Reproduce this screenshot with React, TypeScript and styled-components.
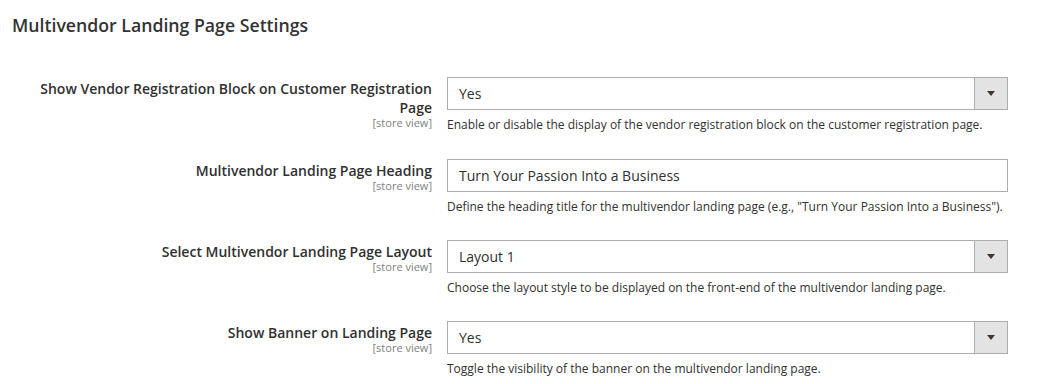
import React from "react";
import styled, { createGlobalStyle } from "styled-components";

const GlobalStyle = createGlobalStyle`
    html, body {
        margin: 0;
        padding: 0;
        background: #ffffff;
    }
    body {
        font-family: "Open Sans", "Liberation Sans", Arial, sans-serif;
        color: #303030;
    }
`;

interface IField {
    id: string;
    label: string;
    kind: "select" | "text";
    value: string;
    note: string;
}

const FIELDS: IField[] = [
    {
        id: "show_vendor_block",
        label: "Show Vendor Registration Block on Customer Registration Page",
        kind: "select",
        value: "Yes",
        note: "Enable or disable the display of the vendor registration block on the customer registration page.",
    },
    {
        id: "landing_heading",
        label: "Multivendor Landing Page Heading",
        kind: "text",
        value: "Turn Your Passion Into a Business",
        note: 'Define the heading title for the multivendor landing page (e.g., "Turn Your Passion Into a Business").',
    },
    {
        id: "landing_layout",
        label: "Select Multivendor Landing Page Layout",
        kind: "select",
        value: "Layout 1",
        note: "Choose the layout style to be displayed on the front-end of the multivendor landing page.",
    },
    {
        id: "show_banner",
        label: "Show Banner on Landing Page",
        kind: "select",
        value: "Yes",
        note: "Toggle the visibility of the banner on the multivendor landing page.",
    },
];

const Section = styled.section`
    padding: 15px 0 0 12px;
`;

const Title = styled.h2`
    margin: 0 0 41px;
    font-size: 17.7px;
    line-height: 21px;
    font-weight: 600;
    color: #333333;
`;

const Fieldset = styled.div`
    display: flex;
    flex-direction: column;
    padding-left: 20px;
`;

const Row = styled.div`
    display: grid;
    grid-template-columns: 400px 561px;
    column-gap: 15px;
    margin-bottom: 25px;

    &:first-child {
        margin-bottom: 26px;
    }
`;

const LabelCell = styled.div`
    display: flex;
    flex-direction: column;
    align-items: flex-end;
    text-align: right;
    padding-top: 2px;
`;

const LabelText = styled.label`
    font-size: 14px;
    line-height: 19px;
    font-weight: 600;
    color: #303030;
`;

const Scope = styled.span`
    font-size: 11px;
    line-height: 13px;
    color: #808080;
    margin-top: -1px;
`;

const ControlCell = styled.div`
    display: flex;
    flex-direction: column;
`;

const InputBox = styled.div`
    display: flex;
    align-items: stretch;
    height: 33px;
    box-sizing: border-box;
    border: 1px solid #adadad;
    background: #ffffff;
`;

const Value = styled.span`
    flex: 1;
    display: flex;
    align-items: center;
    padding: 0 11px;
    font-size: 14px;
    color: #303030;
`;

const ArrowBox = styled.span`
    width: 32px;
    display: flex;
    align-items: center;
    justify-content: center;
    background: #e3e3e3;
    border-left: 1px solid #adadad;
`;

const Arrow = styled.span`
    width: 0;
    height: 0;
    border-left: 4px solid transparent;
    border-right: 4px solid transparent;
    border-top: 5px solid #41362f;
`;

const Note = styled.div`
    margin-top: 6px;
    font-size: 12px;
    line-height: 17px;
    color: #303030;
`;

const App: React.FC = () => {
    return (
        <>
            <GlobalStyle />
            <Section>
                <Title>Multivendor Landing Page Settings</Title>
                <Fieldset>
                    {FIELDS.map((field) => (
                        <Row key={field.id}>
                            <LabelCell>
                                <LabelText htmlFor={field.id}>{field.label}</LabelText>
                                <Scope>[store view]</Scope>
                            </LabelCell>
                            <ControlCell>
                                <InputBox id={field.id}>
                                    <Value>{field.value}</Value>
                                    {field.kind === "select" && (
                                        <ArrowBox>
                                            <Arrow />
                                        </ArrowBox>
                                    )}
                                </InputBox>
                                <Note>{field.note}</Note>
                            </ControlCell>
                        </Row>
                    ))}
                </Fieldset>
            </Section>
        </>
    );
};

export default App;
